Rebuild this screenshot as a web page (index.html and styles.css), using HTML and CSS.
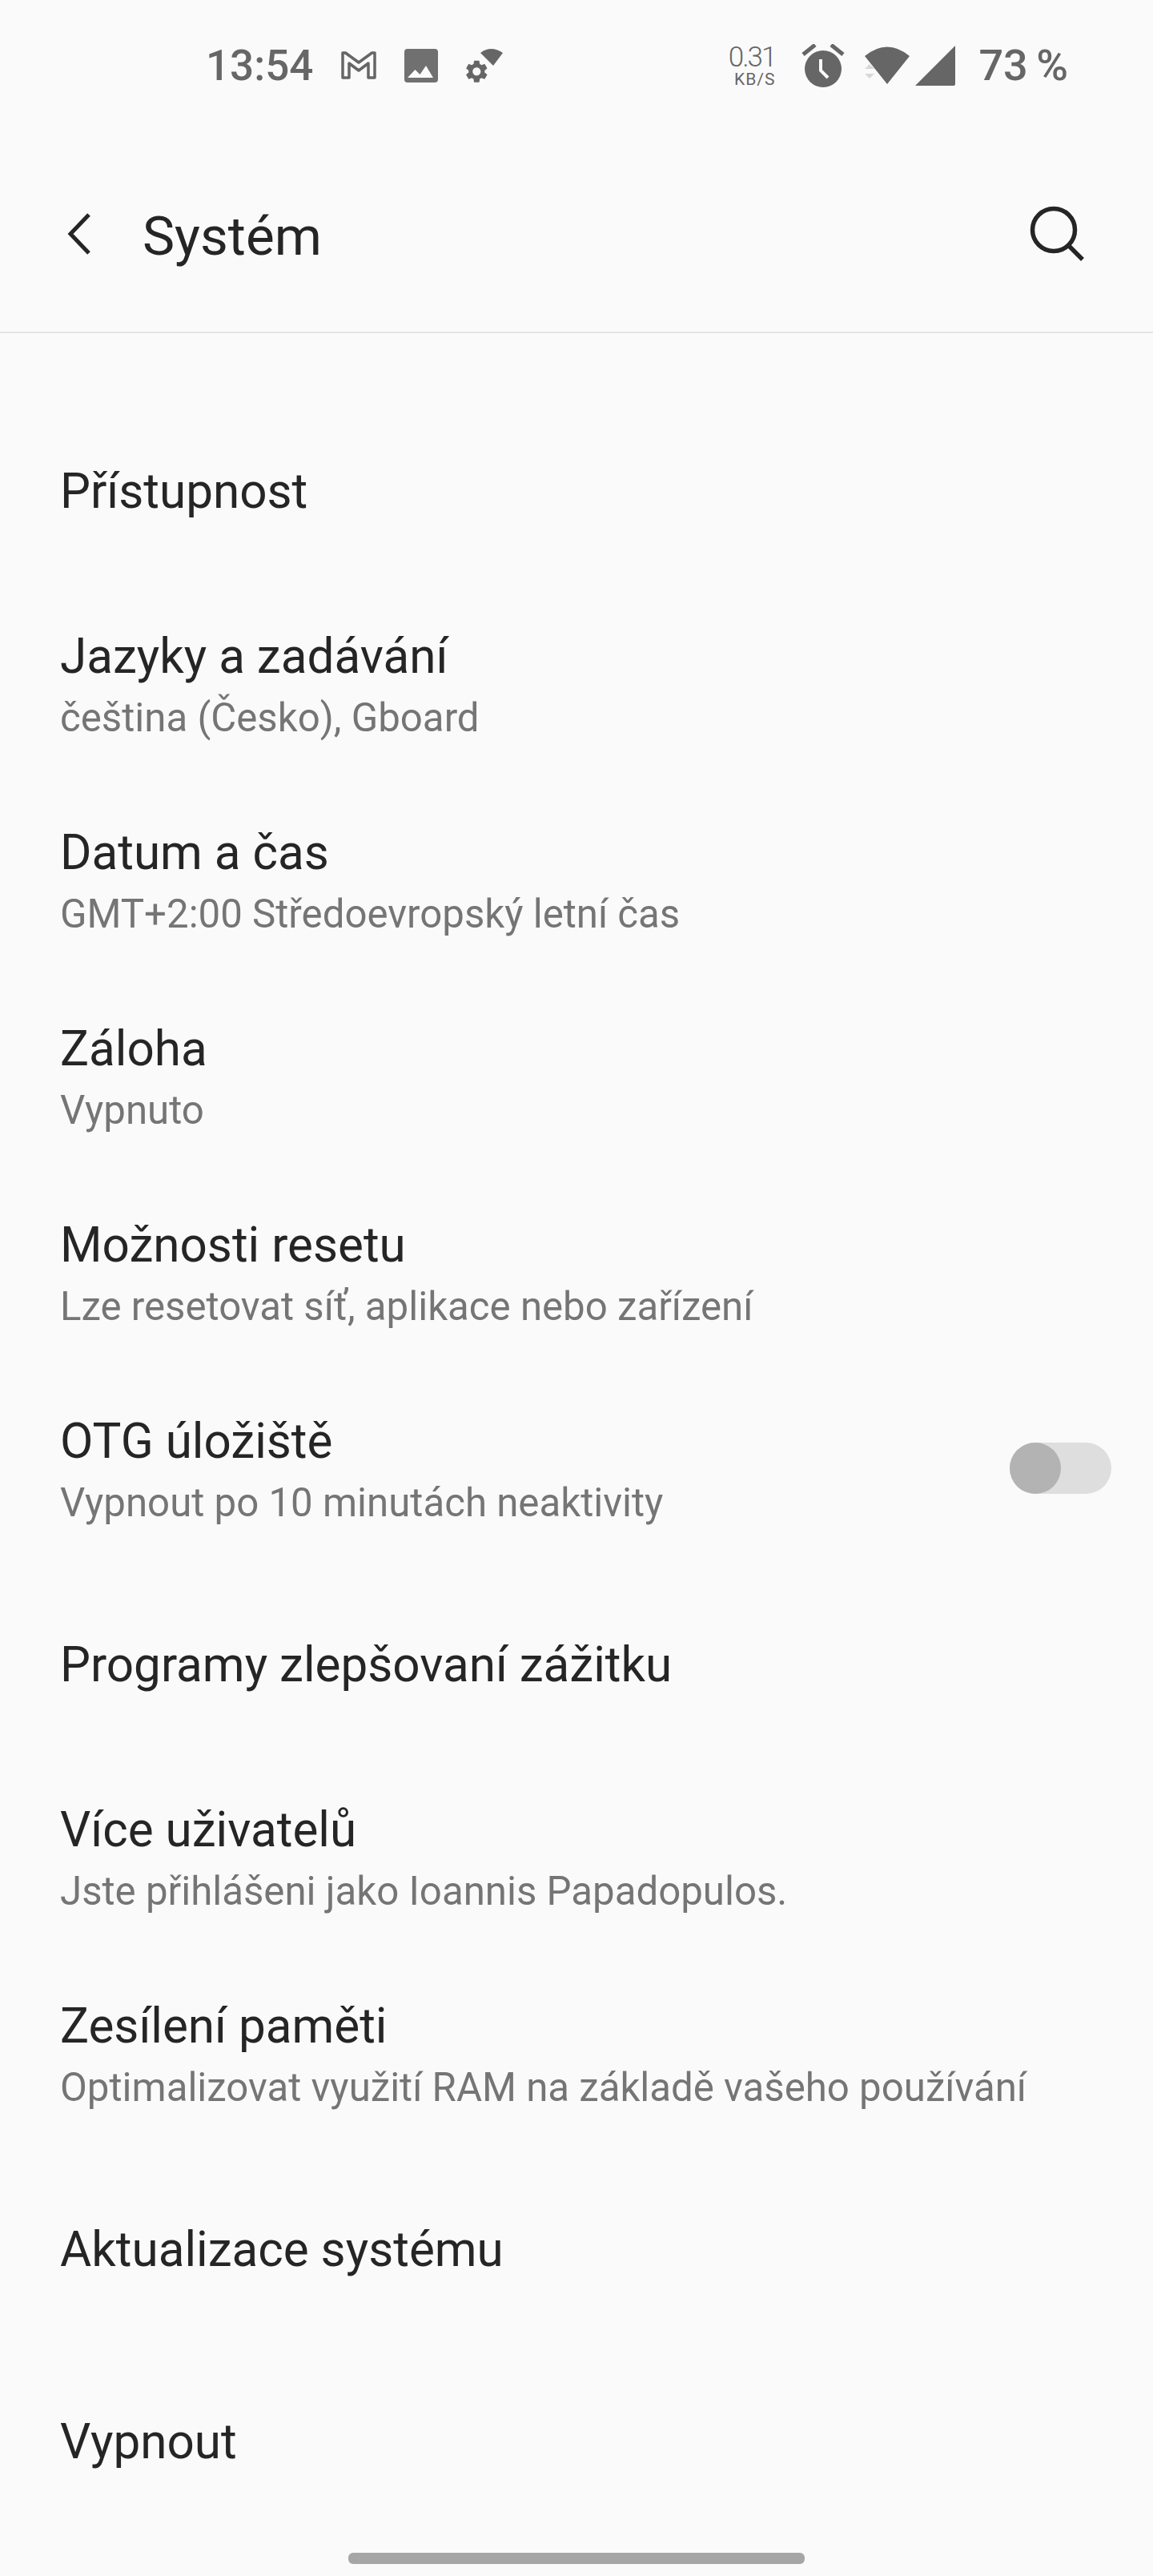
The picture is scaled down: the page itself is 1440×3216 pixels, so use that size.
FILE: index.html
```html
<!DOCTYPE html>
<html lang="cs">
<head>
    <meta charset="UTF-8">
    <meta name="viewport" content="width=device-width, initial-scale=1.0">
    <title>Systém</title>
    <link rel="stylesheet" href="styles.css">
</head>
<body>
    <div class="phone">
        <div class="status-bar">
            <div class="status-left">
                <span class="clock">13:54</span>
                <svg class="ic-gmail" width="48" height="38" viewBox="0 0 48 38">
                    <path d="M4 3h3.500L24 15 40.500 3H44v31h-8V16l-12 9-12-9v18H4z" fill="none" stroke="#666" stroke-width="3.500" stroke-linejoin="round"/>
                </svg>
                <svg class="ic-image" width="44" height="44" viewBox="0 0 44 44">
                    <rect x="1" y="1" width="42" height="42" rx="4" fill="#707070"/>
                    <path d="M5 37l9.500-10 6 6 7.500-11 9 15z" fill="#fafafa"/>
                </svg>
                <svg class="ic-gear" width="50" height="46" viewBox="0 0 50 46">
                    <g transform="translate(-1.500 13.500) scale(1.400)">
                        <path fill="#666" fill-rule="evenodd" d="M19.140 12.940c.04-.3.06-.61.06-.94 0-.32-.02-.64-.07-.94l2.030-1.580a.49.49 0 0 0 .12-.61l-1.920-3.320a.488.488 0 0 0-.59-.22l-2.390.96c-.5-.38-1.030-.7-1.620-.94l-.36-2.540a.484.484 0 0 0-.48-.41h-3.840c-.24 0-.43.17-.47.41l-.36 2.540c-.59.24-1.130.57-1.620.94l-2.390-.96c-.22-.08-.47 0-.59.22L2.740 8.870c-.12.21-.08.47.12.61l2.030 1.580c-.05.3-.09.63-.09.94s.02.64.07.94l-2.030 1.580a.49.49 0 0 0-.12.61l1.920 3.320c.12.22.37.29.59.22l2.390-.96c.5.38 1.030.7 1.620.94l.36 2.540c.05.24.24.41.48.41h3.840c.24 0 .44-.17.47-.41l.36-2.540c.59-.24 1.130-.56 1.620-.94l2.390.96c.22.08.47 0 .59-.22l1.920-3.320c.12-.22.07-.47-.12-.61l-2.010-1.580zM12 15.600c-1.980 0-3.600-1.620-3.600-3.600s1.620-3.600 3.600-3.600 3.600 1.620 3.600 3.600-1.620 3.600-3.600 3.600z"/>
                    </g>
                    <path d="M20 7Q33-3 48 7L36 23z" fill="#666"/>
                </svg>
            </div>
            <div class="status-right">
                <div class="speed">
                    <span class="speed-num">0.31</span>
                    <span class="speed-unit">KB/S</span>
                </div>
                <svg class="ic-alarm" width="54" height="54" viewBox="0 0 54 54">
                    <circle cx="27" cy="31" r="23" fill="#666"/>
                    <path d="M2 13L17 1M52 13L37 1" stroke="#666" stroke-width="5"/>
                    <path d="M24 19v14l9 9" fill="none" stroke="#fafafa" stroke-width="4"/>
                </svg>
                <svg class="ic-wifi" width="56" height="48" viewBox="0 0 56 48">
                    <path d="M0 12Q28-11 56 12L28 47z" fill="#666"/>
                    <path d="M0 28l6-6 6 6zM0 34h12l-6 6z" fill="#d8d8d8"/>
                </svg>
                <svg class="ic-signal" width="50" height="50" viewBox="0 0 50 50">
                    <path d="M50 0v48q0 2-2 2H0z" fill="#666"/>
                </svg>
                <span class="battery">73 %</span>
            </div>
        </div>

        <header class="app-bar">
            <svg class="back" width="30" height="54" viewBox="0 0 30 54">
                <path d="M27 3L4 27l23 24" fill="none" stroke="#252525" stroke-width="5"/>
            </svg>
            <h1 class="title">Systém</h1>
            <svg class="search" width="70" height="70" viewBox="0 0 70 70">
                <circle cx="30" cy="30" r="26.500" fill="none" stroke="#252525" stroke-width="5.500"/>
                <path d="M48 49l18 18" stroke="#252525" stroke-width="5.500"/>
            </svg>
        </header>

        <main class="list">
            <div class="row single"><div class="row-title">Přístupnost</div></div>
            <div class="row"><div class="row-title">Jazyky a zadávání</div><div class="row-sub">čeština (Česko), Gboard</div></div>
            <div class="row"><div class="row-title">Datum a čas</div><div class="row-sub">GMT+2:00 Středoevropský letní čas</div></div>
            <div class="row"><div class="row-title">Záloha</div><div class="row-sub">Vypnuto</div></div>
            <div class="row"><div class="row-title">Možnosti resetu</div><div class="row-sub">Lze resetovat síť, aplikace nebo zařízení</div></div>
            <div class="row row-switch">
                <div>
                    <div class="row-title">OTG úložiště</div>
                    <div class="row-sub">Vypnout po 10 minutách neaktivity</div>
                </div>
                <div class="switch"><div class="switch-thumb"></div></div>
            </div>
            <div class="row single"><div class="row-title">Programy zlepšovaní zážitku</div></div>
            <div class="row"><div class="row-title">Více uživatelů</div><div class="row-sub">Jste přihlášeni jako Ioannis Papadopulos.</div></div>
            <div class="row"><div class="row-title">Zesílení paměti</div><div class="row-sub">Optimalizovat využití RAM na základě vašeho používání</div></div>
            <div class="row single"><div class="row-title">Aktualizace systému</div></div>
            <div class="row single"><div class="row-title">Vypnout</div></div>
        </main>

        <div class="home-bar"></div>
    </div>
</body>
</html>
```

FILE: styles.css
```css
body {
    margin: 0;
    background: #fafafa;
    font-family: Roboto, sans-serif;
    color: #252525;
}

.phone {
    position: relative;
    width: 1440px;
    height: 3216px;
    overflow: hidden;
}

.status-bar {
    height: 160px;
    display: flex;
    justify-content: space-between;
    align-items: center;
    padding: 3px 106px 0 257px;
    box-sizing: border-box;
    color: #666;
}

.status-left,
.status-right {
    display: flex;
    align-items: center;
}

.clock {
    font-size: 53px;
    font-weight: 500;
    margin-right: 33px;
}

.ic-image {
    margin-left: 32px;
}

.ic-gear {
    margin-left: 32px;
}

.speed {
    display: flex;
    flex-direction: column;
    align-items: flex-end;
    font-weight: 300;
    margin-right: 33px;
}

.speed-num {
    font-size: 35px;
    line-height: 34px;
    letter-spacing: -2px;
}

.speed-unit {
    font-size: 21px;
    line-height: 20px;
    letter-spacing: 1px;
    font-weight: 400;
}

.ic-wifi {
    margin-left: 25px;
}

.ic-signal {
    margin-left: 7px;
}

.battery {
    font-size: 54px;
    font-weight: 500;
    margin-left: 29px;
    word-spacing: -3px;
}

.app-bar {
    height: 256px;
    box-sizing: border-box;
    border-bottom: 2px solid #e5e5e5;
    display: flex;
    align-items: center;
    padding: 10px 84px 0 84px;
}

.title {
    flex: 1;
    margin: 4px 0 0 64px;
    font-size: 67.500px;
    font-weight: 400;
}

.list {
    padding-top: 77px;
}

.row {
    height: 245px;
    padding: 0 75px;
    box-sizing: border-box;
    display: flex;
    flex-direction: column;
    justify-content: center;
}

.row.single {
    height: 240px;
    padding-top: 2px;
}

.row-title {
    font-size: 60.200px;
    line-height: 80px;
}

.row-sub {
    font-size: 49.200px;
    line-height: 70px;
    margin-top: 1px;
    color: #757575;
}

.row-switch {
    flex-direction: row;
    justify-content: space-between;
    align-items: center;
    padding-right: 52px;
}

.switch {
    width: 127px;
    height: 64px;
    margin-bottom: 6px;
    border-radius: 32px;
    background: #dedede;
}

.switch-thumb {
    width: 64px;
    height: 64px;
    border-radius: 50%;
    background: #b3b3b3;
}

.home-bar {
    position: absolute;
    left: 435px;
    bottom: 15px;
    width: 570px;
    height: 14px;
    border-radius: 6px;
    background: #a6a6a6;
}
```
